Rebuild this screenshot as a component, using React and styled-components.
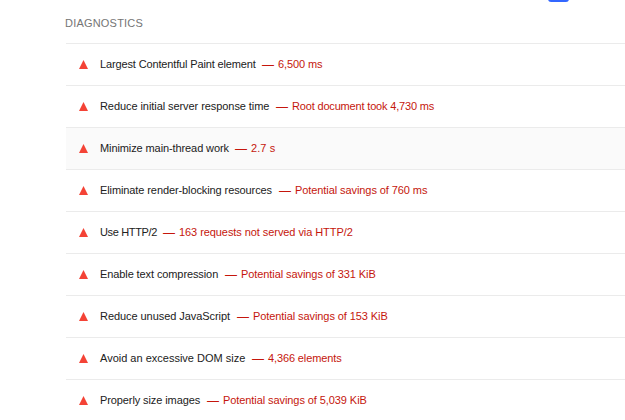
import React from "react";
import styled, { createGlobalStyle } from "styled-components";

const Global = createGlobalStyle`
  body { margin: 0; background: #fff; overflow: hidden; }
`;
const Page = styled.main`
  position: relative;
  height: 420px;
  overflow: hidden;
  font-family: "Liberation Sans", Arial, sans-serif;
  font-size: 11px;
  color: #212121;
`;
const Tab = styled.div`
  position: absolute;
  top: -8px;
  left: 548px;
  width: 21px;
  height: 10px;
  border-radius: 3px;
  background: #3367ff;
`;
const Heading = styled.h2`
  margin: 0 0 0 65px;
  height: 43px;
  line-height: 46px;
  font-size: 11px;
  font-weight: 400;
  letter-spacing: 0.2px;
  color: #757575;
`;
const List = styled.ul`
  list-style: none;
  margin: 0 0 0 66px;
  padding: 0;
`;
const Row = styled.li`
  display: flex;
  align-items: center;
  box-sizing: border-box;
  height: 42px;
  padding-left: 13px;
  border-top: 1px solid #ebebeb;
  background: ${(p) => (p.$active ? "#fafafa" : "#fff")};
  white-space: nowrap;
`;
const Marker = styled.svg`
  width: 9px;
  height: 9px;
  margin-right: 12px;
  fill: #f44336;
`;
const Title = styled.span`
  width: ${(p) => p.$w}px;
  line-height: 13px;
  margin-top: -1px;
  letter-spacing: ${(p) => p.$spacing}px;
`;
const Dash = styled.span`
  width: 12px;
  margin: 1px 4px 0 0;
  line-height: 13px;
  font-size: 12px;
  color: #c5160c;
`;
const Detail = styled.span`
  line-height: 13px;
  margin-top: -1px;
  letter-spacing: ${(p) => p.$spacing}px;
  color: #c5160c;
`;

const audits = [
  ["Largest Contentful Paint element", "6,500 ms", 162, -0.14, -0.1],
  ["Reduce initial server response time", "Root document took 4,730 ms", 176, -0.07, -0.17],
  ["Minimize main-thread work", "2.7 s", 135, -0.1, 0.1],
  ["Eliminate render-blocking resources", "Potential savings of 760 ms", 179, -0.1, -0.08],
  ["Use HTTP/2", "163 requests not served via HTTP/2", 63, -0.35, -0.07],
  ["Enable text compression", "Potential savings of 331 KiB", 125, -0.1, -0.08],
  ["Reduce unused JavaScript", "Potential savings of 153 KiB", 137, -0.06, -0.08],
  ["Avoid an excessive DOM size", "4,366 elements", 152, 0, -0.12],
  ["Properly size images", "Potential savings of 5,039 KiB", 107, -0.1, -0.08],
];

export default function App() {
  return (
    <Page>
      <Global />
      <Tab />
      <Heading>DIAGNOSTICS</Heading>
      <List>
        {audits.map(([title, detail, w, titleSpacing, detailSpacing], i) => (
          <Row key={title} $active={i === 2}>
            <Marker viewBox="0 0 9 9"><path d="M4.5 0 9 9H0Z" /></Marker>
            <Title $w={w} $spacing={titleSpacing}>{title}</Title>
            <Dash>—</Dash>
            <Detail $spacing={detailSpacing}>{detail}</Detail>
          </Row>
        ))}
      </List>
    </Page>
  );
}
